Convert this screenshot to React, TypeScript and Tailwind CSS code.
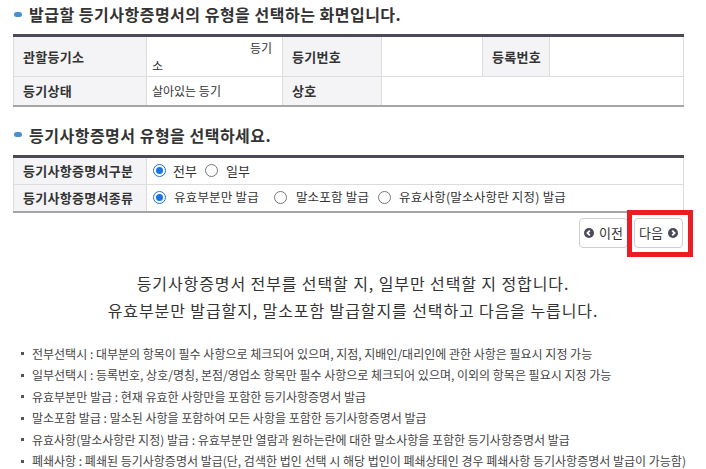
import React from "react";

function Bullet() {
  return <span className="inline-block w-[8px] h-[5px] rounded-full bg-[#4a90d0] mr-[7px]" />;
}

function Radio({ checked }: { checked?: boolean }) {
  return checked ? (
    <span className="inline-flex items-center justify-center w-[13px] h-[13px] rounded-full border-[1.5px] border-[#1a73e8] bg-white">
      <span className="w-[7px] h-[7px] rounded-full bg-[#1a73e8]" />
    </span>
  ) : (
    <span className="inline-block w-[13px] h-[13px] rounded-full border border-[#767676] bg-white" />
  );
}

function CircleIcon({ dir }: { dir: "left" | "right" }) {
  return (
    <svg width="10" height="10" viewBox="0 0 10 10">
      <circle cx="5" cy="5" r="5" fill="#4a4a5c" />
      {dir === "left" ? (
        <path d="M5.8 2.6 L3.4 5 L5.8 7.4" stroke="#fff" strokeWidth="1.8" fill="none" />
      ) : (
        <path d="M4.2 2.6 L6.6 5 L4.2 7.4" stroke="#fff" strokeWidth="1.8" fill="none" />
      )}
    </svg>
  );
}

const th = "bg-[#f4f4f6] font-bold text-[13px] tracking-[0.3px] text-[#333] text-left pl-[9px] border border-[#dcdcdc] align-middle";
const td = "bg-white text-[12px] text-[#333] pl-[5px] border border-[#dcdcdc] align-middle";

const notes = [
  "전부선택시 : 대부분의 항목이 필수 사항으로 체크되어 있으며, 지점, 지배인/대리인에 관한 사항은 필요시 지정 가능",
  "일부선택시 : 등록번호, 상호/명칭, 본점/영업소 항목만 필수 사항으로 체크되어 있으며, 이외의 항목은 필요시 지정 가능",
  "유효부분만 발급 : 현재 유효한 사항만을 포함한 등기사항증명서 발급",
  "말소포함 발급 : 말소된 사항을 포함하여 모든 사항을 포함한 등기사항증명서 발급",
  "유효사항(말소사항란 지정) 발급 : 유효부분만 열람과 원하는란에 대한 말소사항을 포함한 등기사항증명서 발급",
  "폐쇄사항 : 폐쇄된 등기사항증명서 발급(단, 검색한 법인 선택 시 해당 법인이 폐쇄상태인 경우 폐쇄사항 등기사항증명서 발급이 가능함)",
];

export default function App() {
  return (
    <div className="w-[706px] h-[469px] bg-white overflow-hidden text-[#333] font-['Noto_Sans_CJK_KR','Noto_Sans',sans-serif]">
      <div className="pl-[13px] w-[683px]">
        <div className="h-[28px] flex items-center text-[16px] tracking-[0.5px] font-bold text-[#333] pl-[1px]">
          <Bullet />
          <span>발급할 등기사항증명서의 유형을 선택하는 화면입니다.</span>
        </div>

        <table className="mt-[6px] w-[670px] table-fixed border-collapse border-t-[3px] border-t-[#4b4b58] border-b-2 border-b-[#a5a5a8]">
          <colgroup>
            <col className="w-[133px]" />
            <col className="w-[136px]" />
            <col className="w-[99px]" />
            <col className="w-[101px]" />
            <col className="w-[67px]" />
            <col className="w-[134px]" />
          </colgroup>
          <tbody>
            <tr className="h-[41px]">
              <th className={th + " border-t-0"}>관할등기소</th>
              <td className={td + " border-t-0 pr-[10px]"}>
                <div className="text-right leading-[16px]">등기</div>
                <div className="leading-[16px] mt-[2px]">소</div>
              </td>
              <th className={th + " border-t-0 pl-[7px]"}>등기번호</th>
              <td className={td + " border-t-0"}></td>
              <th className={th + " border-t-0 pl-[7px]"}>등록번호</th>
              <td className={td + " border-t-0"}></td>
            </tr>
            <tr className="h-[29px]">
              <th className={th + " border-b-0"}>등기상태</th>
              <td className={td + " border-b-0"}>살아있는 등기</td>
              <th className={th + " border-b-0 pl-[7px]"}>상호</th>
              <td className={td + " border-b-0"} colSpan={3}></td>
            </tr>
          </tbody>
        </table>

        <div className="mt-[14px] h-[28px] flex items-center text-[16px] tracking-[0.5px] font-bold text-[#333] pl-[1px]">
          <Bullet />
          <span>등기사항증명서 유형을 선택하세요.</span>
        </div>

        <table className="mt-[6px] w-[670px] table-fixed border-collapse border-t-[3px] border-t-[#4b4b58] border-b-2 border-b-[#a5a5a8]">
          <colgroup>
            <col className="w-[133px]" />
            <col className="w-[537px]" />
          </colgroup>
          <tbody>
            <tr className="h-[28px]">
              <th className={th + " border-t-0"}>등기사항증명서구분</th>
              <td className={td + " border-t-0"}>
                <div className="flex items-center text-[13px]">
                  <span className="ml-[1px] flex"><Radio checked /></span>
                  <span className="ml-[7px]">전부</span>
                  <span className="ml-[8px] flex"><Radio /></span>
                  <span className="ml-[8px]">일부</span>
                </div>
              </td>
            </tr>
            <tr className="h-[28px]">
              <th className={th + " border-b-0"}>등기사항증명서종류</th>
              <td className={td + " border-b-0"}>
                <div className="flex items-center text-[12.5px] tracking-[0.2px]">
                  <span className="ml-[1px] flex"><Radio checked /></span>
                  <span className="ml-[8px]">유효부분만 발급</span>
                  <span className="ml-[15px] flex"><Radio /></span>
                  <span className="ml-[9px]">말소포함 발급</span>
                  <span className="ml-[9px] flex"><Radio /></span>
                  <span className="ml-[8px]">유효사항(말소사항란 지정) 발급</span>
                </div>
              </td>
            </tr>
          </tbody>
        </table>

        <div className="mt-[5px] flex justify-end gap-[6px]">
          <button className="w-[49px] h-[30px] rounded-[4px] border border-[#cfcfd3] bg-white flex items-center justify-center gap-[5px] text-[13px] text-[#333]">
            <CircleIcon dir="left" />
            <span>이전</span>
          </button>
          <div className="relative">
            <button className="w-[49px] h-[30px] rounded-[4px] border border-[#cfcfd3] bg-white flex items-center justify-center gap-[5px] text-[13px] text-[#333]">
              <span>다음</span>
              <CircleIcon dir="right" />
            </button>
            <div className="absolute left-[-7px] right-[-10px] top-[-8px] bottom-[-9px] border-[5px] border-[#ec1c24]" />
          </div>
        </div>
      </div>

      <div className="mt-[22px] text-center text-[16px] tracking-[0.9px] leading-[27px] text-[#333]">
        <div>등기사항증명서 전부를 선택할 지, 일부만 선택할 지 정합니다.</div>
        <div>유효부분만 발급할지, 말소포함 발급할지를 선택하고 다음을 누릅니다.</div>
      </div>

      <ul className="mt-[19px] pl-[21px]">
        {notes.map((n) => (
          <li key={n} className="h-[21.5px] flex items-center text-[12px] leading-[14px] text-[#444] whitespace-nowrap">
            <span className="inline-block w-[3px] h-[3px] bg-[#555] mr-[8px]" />
            <span>{n}</span>
          </li>
        ))}
      </ul>
    </div>
  );
}
